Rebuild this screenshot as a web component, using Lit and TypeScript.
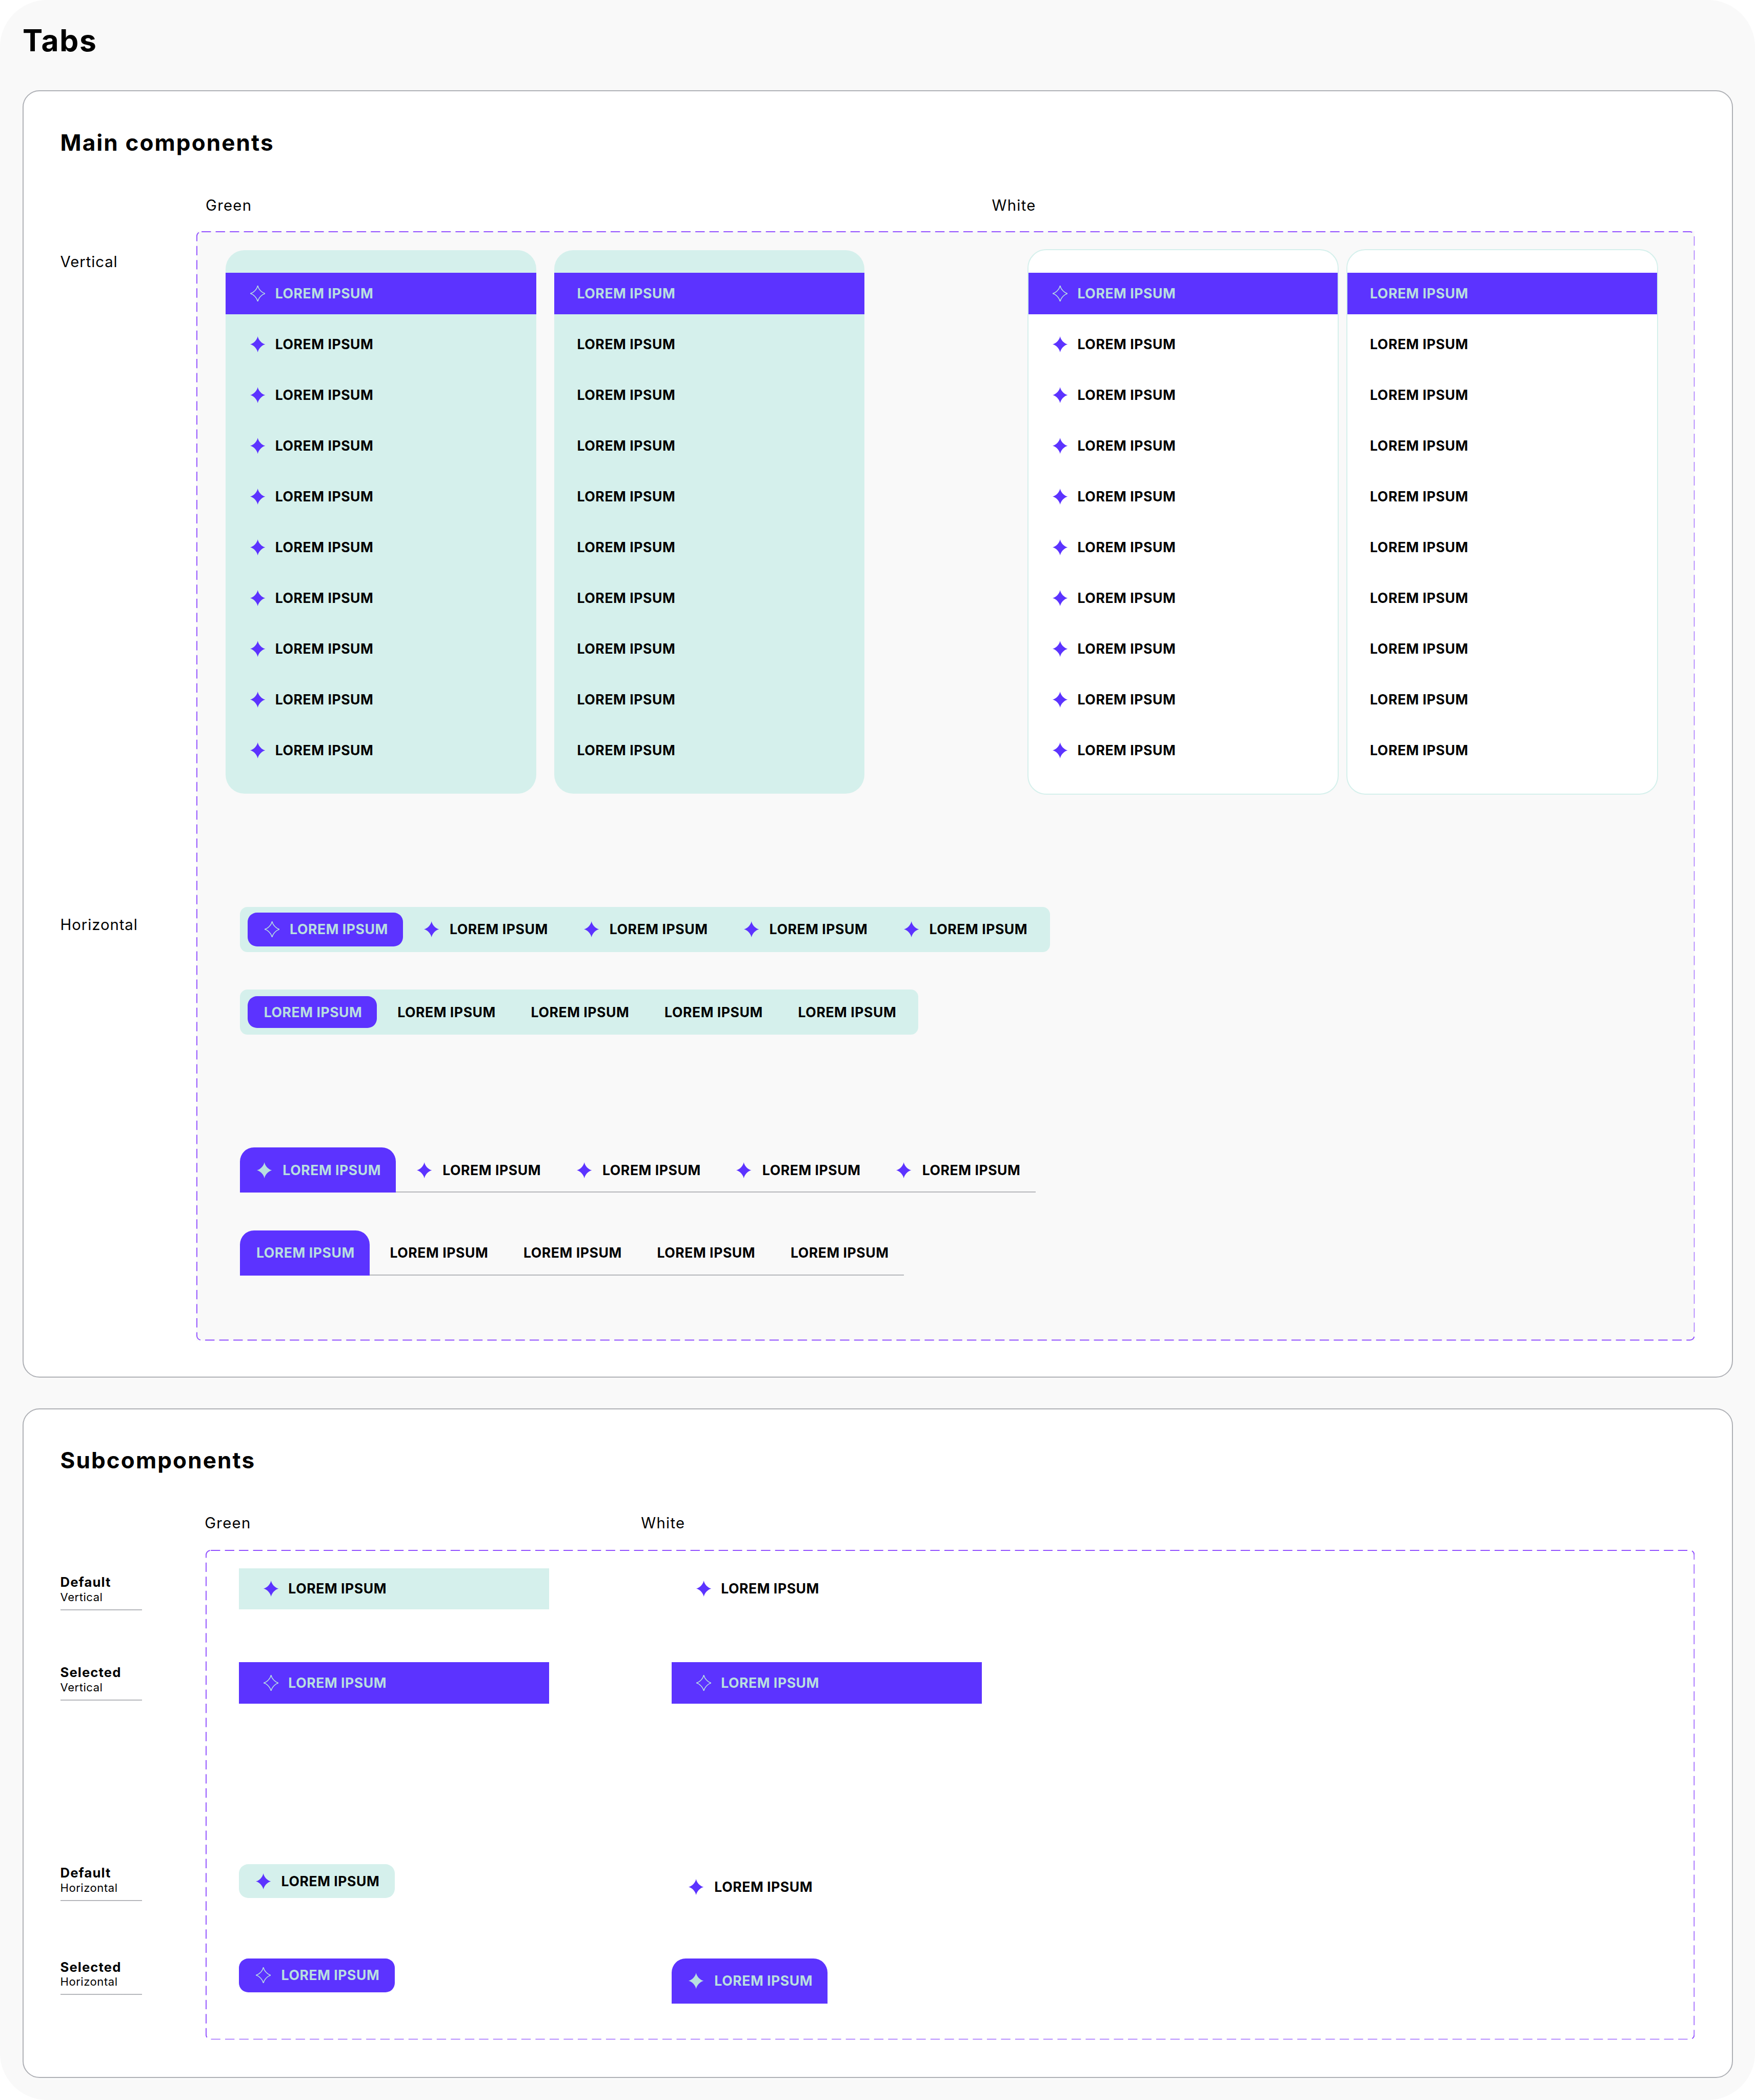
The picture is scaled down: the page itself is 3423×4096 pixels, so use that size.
import { LitElement, html, css, svg } from "lit";
import { customElement } from "lit/decorators.js";

const star = (kind = "") => html`<svg class="ic ${kind}" viewBox="0 0 32 34"><path d="M16 0C17.5 8 25 15.5 32 17C25 18.5 17.5 26 16 34C14.5 26 7 18.5 0 17C7 15.5 14.5 8 16 0Z"/></svg>`;
const lorem = html`<span class="t">LOREM IPSUM</span>`;
const dash = svg`<svg class="dash"><rect rx="10" ry="10"/></svg>`;

@customElement("app-root")
export class AppRoot extends LitElement {
  static styles = css`
    :host { display: block; }
    * { box-sizing: border-box; }
    .page { zoom: 0.9172; width: 3732px; height: 4466px; background: #f9f9f9; border-radius: 100px; padding: 55px 0 0 48px; font-family: Inter, "Liberation Sans", sans-serif; color: #000; white-space: nowrap; }
    h1 { margin: 0 0 73px; font-size: 64px; line-height: 64px; font-weight: 700; letter-spacing: 1.8px; }
    h2 { margin: 0; font-size: 48px; line-height: 48px; font-weight: 700; letter-spacing: 2.3px; }
    .card { width: 3637px; background: #fff; border: 2.2px solid #aeb0b5; border-radius: 36px; padding: 85px 79px 76px 78px; }
    .card + .card { margin-top: 65px; padding-bottom: 79px; }
    .heads { display: flex; margin-top: 90px; height: 40px; line-height: 40px; font-size: 32px; letter-spacing: 1.4px; }
    .heads.a { padding-left: 309px; margin-bottom: 35px; }
    .heads.a span:first-child { width: 1672px; }
    .heads.b { padding-left: 307px; margin-bottom: 36px; }
    .heads.b span:first-child { width: 928px; }
    .body { display: flex; }
    .labels { flex: none; width: 289px; font-size: 32px; line-height: 40px; letter-spacing: 1px; }
    .labels.b { width: 309px; }
    .labels .v { margin-top: 45px; }
    .labels .h { margin-top: 1370px; }
    .box { position: relative; flex: 1; background: #f9f9f9; padding: 38px 0 139px 63px; }
    .box.w { background: #fff; padding: 39px 0 77px 71px; }
    .dash { position: absolute; inset: 0; width: 100%; height: 100%; pointer-events: none; }
    .dash rect { x: 1px; y: 1px; width: calc(100% - 2px); height: calc(100% - 2px); fill: none; stroke: #9150ff; stroke-width: 2.2px; stroke-dasharray: 20 10; }
    .ic { flex: none; width: 32px; height: 34px; display: block; }
    .ic path { fill: #5c33ff; }
    .ic.out path { fill: none; stroke: #b8dfe0; stroke-width: 1.6px; }
    .ic.lt path { fill: #b8dfe0; }
    .t { font-size: 29px; font-weight: 700; line-height: 34px; letter-spacing: 0.6px; }
    .panels { display: flex; align-items: flex-start; }
    .panel { flex: none; width: 660px; margin-top: 2px; background: #d5f0ec; border-radius: 40px; padding: 48px 0; display: flex; flex-direction: column; gap: 20px; }
    .panel + .panel { margin-left: 38px; }
    .panel.white { margin-top: 0; width: 662px; background: #fff; border: 2.2px solid #d5f0ec; margin-left: 347px; }
    .panel.white + .panel.white { margin-left: 16px; width: 663px; }
    .row { flex: none; height: 88px; display: flex; align-items: center; padding-left: 52px; gap: 21px; }
    .row.plain { padding-left: 49px; }
    .white .row { padding-left: 51px; }
    .white .row.plain { padding-left: 48px; }
    .sel { background: #5c33ff; color: #b8dfe0; }
    .groups { margin-top: 238px; }
    .group { display: flex; width: fit-content; margin-left: 30px; }
    .group.pill { background: #d5f0ec; border-radius: 16px; padding: 12px 16px; gap: 9px; }
    .group.pill.plain { padding: 14px 16px; margin-top: 80px; }
    .group.line { gap: 8px; background: linear-gradient(#aeb0b5, #aeb0b5) left bottom / 100% 2px no-repeat; }
    .group.line.first { margin-top: 240px; }
    .group.line.second { margin-top: 80px; }
    .chip { flex: none; width: 331px; height: 72px; border-radius: 20px; display: flex; align-items: center; padding-left: 36px; gap: 22px; }
    .plain .chip { width: 275px; height: 68px; padding-left: 35px; }
    .tab { flex: none; width: 332px; height: 96px; border-radius: 30px 30px 0 0; display: flex; align-items: center; padding-left: 36px; gap: 23px; }
    .plain .tab { width: 276px; padding-left: 35px; }
    .subgrid { display: grid; grid-template-columns: 920px 661px; grid-template-rows: 88px 200px 438px 200px; align-items: start; }
    .subgrid .row { width: 660px; }
    .subgrid > .r2 { margin-top: 112px; }
    .subgrid > .r3 { margin-top: 342px; }
    .subgrid > .r4 { margin-top: 104px; }
    .teal { background: #d5f0ec; }
    .stack { display: flex; flex-direction: column; padding-top: 53px; }
    .stack .m2 { margin-top: 116px; }
    .stack .m3 { margin-top: 350px; }
    .stack .m4 { margin-top: 124px; }
    .block { width: 174px; height: 76px; font-size: 24px; line-height: 32px; letter-spacing: 0.6px; background: linear-gradient(#aeb0b5, #aeb0b5) left bottom / 100% 2px no-repeat; }
    .block b { display: block; font-size: 28px; font-weight: 700; line-height: 32px; letter-spacing: 1.2px; }
    .block span { display: block; }
  `;

  render() {
    const nine = Array.from({ length: 9 });
    const four = [1, 2, 3, 4];
    return html`<div class="page">
      <h1>Tabs</h1>
      <section class="card">
        <h2>Main components</h2>
        <div class="heads a"><span>Green</span><span>White</span></div>
        <div class="body">
          <div class="labels"><div class="v">Vertical</div><div class="h">Horizontal</div></div>
          <div class="box">
            ${dash}
            <div class="panels">
              <div class="panel">
                <div class="row sel">${star("out")}${lorem}</div>
                ${nine.map(() => html`<div class="row">${star()}${lorem}</div>`)}
              </div>
              <div class="panel">
                <div class="row plain sel">${lorem}</div>
                ${nine.map(() => html`<div class="row plain">${lorem}</div>`)}
              </div>
              <div class="panel white">
                <div class="row sel">${star("out")}${lorem}</div>
                ${nine.map(() => html`<div class="row">${star()}${lorem}</div>`)}
              </div>
              <div class="panel white">
                <div class="row plain sel">${lorem}</div>
                ${nine.map(() => html`<div class="row plain">${lorem}</div>`)}
              </div>
            </div>
            <div class="groups">
              <div class="group pill">
                <div class="chip sel">${star("out")}${lorem}</div>
                ${four.map(() => html`<div class="chip">${star()}${lorem}</div>`)}
              </div>
              <div class="group pill plain">
                <div class="chip sel">${lorem}</div>
                ${four.map(() => html`<div class="chip">${lorem}</div>`)}
              </div>
              <div class="group line first">
                <div class="tab sel">${star("lt")}${lorem}</div>
                ${four.map(() => html`<div class="tab">${star()}${lorem}</div>`)}
              </div>
              <div class="group line second plain">
                <div class="tab sel">${lorem}</div>
                ${four.map(() => html`<div class="tab">${lorem}</div>`)}
              </div>
            </div>
          </div>
        </div>
      </section>
      <section class="card">
        <h2>Subcomponents</h2>
        <div class="heads b"><span>Green</span><span>White</span></div>
        <div class="body">
          <div class="labels b stack">
            <div class="block"><b>Default</b><span>Vertical</span></div>
            <div class="block m2"><b>Selected</b><span>Vertical</span></div>
            <div class="block m3"><b>Default</b><span>Horizontal</span></div>
            <div class="block m4"><b>Selected</b><span>Horizontal</span></div>
          </div>
          <div class="box w">
            ${dash}
            <div class="subgrid">
              <div class="row teal">${star()}${lorem}</div>
              <div class="row">${star()}${lorem}</div>
              <div class="row sel r2">${star("out")}${lorem}</div>
              <div class="row sel r2">${star("out")}${lorem}</div>
              <div class="chip teal r3">${star()}${lorem}</div>
              <div class="tab r3">${star()}${lorem}</div>
              <div class="chip sel r4">${star("out")}${lorem}</div>
              <div class="tab sel r4">${star("lt")}${lorem}</div>
            </div>
          </div>
        </div>
      </section>
    </div>`;
  }
}
